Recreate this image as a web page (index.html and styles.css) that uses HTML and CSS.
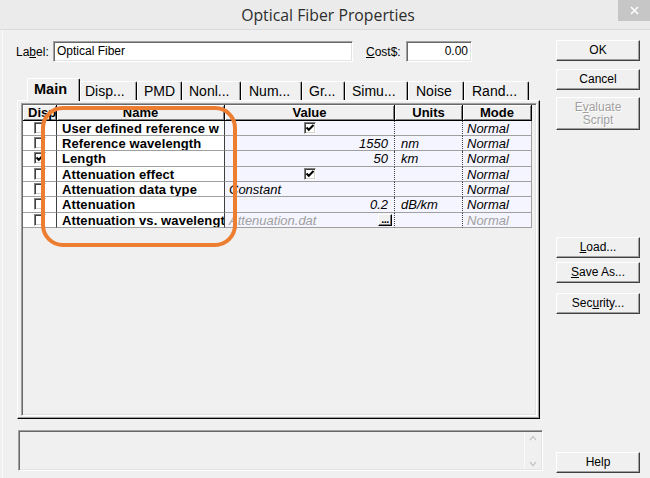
FILE: index.html
```html
<!DOCTYPE html>
<html>
<head>
<meta charset="utf-8">
<title>Optical Fiber Properties</title>
<link rel="stylesheet" href="styles.css">
</head>
<body>
<div class="window">
  <div class="titlebar">
    <div class="title">Optical Fiber Properties</div>
    <div class="close"><svg width="9" height="9" viewBox="0 0 9 9"><path d="M1 1 L8 8 M8 1 L1 8" stroke="#fff" stroke-width="1.5" fill="none"/></svg></div>
  </div>
  <div class="content">
    <div class="main">
      <div class="label-row">
        <span class="field-label">La<u>b</u>el:</span>
        <div class="text-input label-input">Optical Fiber</div>
        <span class="cost-label"><u>C</u>ost$:</span>
        <div class="text-input cost-input">0.00</div>
      </div>
      <div class="tabs">
        <div class="tab active">Main</div>
        <div class="tab">Disp...</div>
        <div class="tab">PMD</div>
        <div class="tab">Nonl...</div>
        <div class="tab">Num...</div>
        <div class="tab">Gr...</div>
        <div class="tab">Simu...</div>
        <div class="tab">Noise</div>
        <div class="tab">Rand...</div>
      </div>
      <div class="panel">
        <div class="grid">
          <table class="props">
            <colgroup>
              <col class="c-disp"><col class="c-name"><col class="c-value"><col class="c-units"><col class="c-mode">
            </colgroup>
            <thead>
              <tr><th class="h-disp">Disp</th><th>Name</th><th>Value</th><th>Units</th><th>Mode</th></tr>
            </thead>
            <tbody>
              <tr>
                <td class="disp"><span class="cb"></span></td>
                <td class="name">User defined reference w</td>
                <td class="val center"><span class="cb"><svg width="10" height="10" viewBox="0 0 10 10"><path d="M1.5 4.5 L3.8 6.8 L8.5 2" stroke="#000" stroke-width="2" fill="none"/></svg></span></td>
                <td class="units"></td>
                <td class="mode">Normal</td>
              </tr>
              <tr>
                <td class="disp"><span class="cb"></span></td>
                <td class="name">Reference wavelength</td>
                <td class="val num">1550</td>
                <td class="units">nm</td>
                <td class="mode">Normal</td>
              </tr>
              <tr class="tall">
                <td class="disp"><span class="cb"><svg width="10" height="10" viewBox="0 0 10 10"><path d="M1.5 4.5 L3.8 6.8 L8.5 2" stroke="#000" stroke-width="2" fill="none"/></svg></span></td>
                <td class="name">Length</td>
                <td class="val num">50</td>
                <td class="units">km</td>
                <td class="mode">Normal</td>
              </tr>
              <tr>
                <td class="disp"><span class="cb"></span></td>
                <td class="name">Attenuation effect</td>
                <td class="val center"><span class="cb"><svg width="10" height="10" viewBox="0 0 10 10"><path d="M1.5 4.5 L3.8 6.8 L8.5 2" stroke="#000" stroke-width="2" fill="none"/></svg></span></td>
                <td class="units"></td>
                <td class="mode">Normal</td>
              </tr>
              <tr>
                <td class="disp"><span class="cb"></span></td>
                <td class="name">Attenuation data type</td>
                <td class="val text">Constant</td>
                <td class="units"></td>
                <td class="mode">Normal</td>
              </tr>
              <tr class="tall">
                <td class="disp"><span class="cb"></span></td>
                <td class="name">Attenuation</td>
                <td class="val num">0.2</td>
                <td class="units">dB/km</td>
                <td class="mode">Normal</td>
              </tr>
              <tr class="disabled">
                <td class="disp"><span class="cb"></span></td>
                <td class="name">Attenuation vs. wavelengt</td>
                <td class="val text"><div class="file-cell"><span>Attenuation.dat</span><span class="dots">...</span></div></td>
                <td class="units"></td>
                <td class="mode">Normal</td>
              </tr>
            </tbody>
          </table>
        </div>
      </div>
      <div class="desc">
        <div class="scroll">
          <svg width="8" height="6" viewBox="0 0 8 6"><path d="M1 5 L4 1.5 L7 5" stroke="#c4c4c4" stroke-width="1.2" fill="none"/></svg>
          <svg width="8" height="6" viewBox="0 0 8 6"><path d="M1 1 L4 4.5 L7 1" stroke="#c4c4c4" stroke-width="1.2" fill="none"/></svg>
        </div>
      </div>
    </div>
    <div class="side">
      <button class="btn btn-ok">OK</button>
      <button class="btn btn-cancel">Cancel</button>
      <button class="btn btn-eval" disabled>E<u>v</u>aluate<br>Script</button>
      <button class="btn btn-load"><u>L</u>oad...</button>
      <button class="btn btn-save"><u>S</u>ave As...</button>
      <button class="btn btn-security">Sec<u>u</u>rity...</button>
      <button class="btn btn-help">Help</button>
    </div>
  </div>
  <div class="highlight"></div>
</div>
</body>
</html>
```
FILE: styles.css
```css
* { box-sizing: border-box; }
html, body { margin: 0; padding: 0; }
body {
  width: 650px;
  height: 478px;
  overflow: hidden;
  background: #f0f0f0;
  font-family: "Liberation Sans", Arial, sans-serif;
  font-size: 12px;
  color: #000;
}
.window {
  position: relative;
  width: 650px;
  height: 478px;
  display: flex;
  flex-direction: column;
}
.titlebar {
  flex: none;
  height: 30px;
  display: grid;
  grid-template-columns: 32px 1fr 32px;
  align-items: start;
  background: #ebebeb;
  border-bottom: 1px solid #dadada;
}
.title {
  grid-column: 2;
  text-align: center;
  padding-left: 6px;
  font-family: "Open Sans", "Liberation Sans", sans-serif;
  font-size: 15.8px;
  line-height: 30px;
  color: #2e2e2e;
}
.close {
  grid-column: 3;
  width: 32px;
  height: 21px;
  background: #c6c6c6;
  display: flex;
  align-items: center;
  justify-content: center;
}
.content {
  flex: 1;
  display: flex;
  box-shadow: inset 2px 0 #f0f0f0, inset 3px 0 #fafafa;
}
.main {
  width: 556px;
  padding: 11px 0 0 16px;
  display: flex;
  flex-direction: column;
}
.label-row {
  display: flex;
  align-items: center;
  height: 21px;
}
.field-label { width: 37px; }
.cost-label { margin-left: 13px; width: 40px; }
.text-input {
  height: 21px;
  background: #fff;
  border: 1px solid;
  border-color: #a0a0a0 #fff #fff #a0a0a0;
  box-shadow: inset 1px 1px #696969, inset -1px -1px #e3e3e3;
  line-height: 18px;
  padding: 0 3px;
  white-space: nowrap;
}
.label-input { width: 300px; }
.cost-input { width: 66px; text-align: right; padding-right: 3px; }

.tabs {
  display: flex;
  align-items: flex-end;
  height: 22px;
  margin-top: 16px;
  margin-left: 11px;
}
.tab {
  height: 19px;
  padding-left: 6px;
  font-size: 14px;
  line-height: 18px;
  white-space: nowrap;
  overflow: hidden;
  background: #f0f0f0;
  border-top: 1px solid #fff;
  border-left: 1px solid #fff;
  border-right: 1px solid #000;
  box-shadow: inset -1px 0 #a0a0a0;
  border-radius: 2px 2px 0 0;
}
.tab.active {
  height: 23px;
  margin-bottom: -1px;
  position: relative;
  z-index: 1;
  font-weight: bold;
  font-size: 14.5px;
  line-height: 21px;
}
.tab:nth-child(1) { width: 53px; }
.tab:nth-child(2) { width: 57px; padding-left: 4px; }
.tab:nth-child(3) { width: 45px; }
.tab:nth-child(4) { width: 59px; }
.tab:nth-child(5) { width: 61px; padding-left: 7px; }
.tab:nth-child(6) { width: 43px; }
.tab:nth-child(7) { width: 63px; }
.tab:nth-child(8) { width: 56px; padding-left: 7px; }
.tab:nth-child(9) { width: 65px; padding-left: 7px; }

.panel {
  margin-left: 1px;
  width: 523px;
  height: 319px;
  display: flex;
  border: 1px solid;
  border-color: #fff #000 #000 #fff;
  box-shadow: inset -1px -1px #a0a0a0;
  padding: 2px 2px 2px 3px;
}
.grid {
  flex: 1;
  background: #f0f0f0;
  border: 1px solid;
  border-color: #a0a0a0 #fff #fff #a0a0a0;
  box-shadow: inset 1px 1px #696969, inset -1px -1px #e3e3e3;
  padding: 1px 0 0 1px;
  overflow: hidden;
}
.props {
  table-layout: fixed;
  width: 509px;
  border-collapse: separate;
  border-spacing: 0;
  font-size: 13px;
}
.c-disp { width: 34px; }
.c-name { width: 168px; }
.c-value { width: 170px; }
.c-units { width: 68px; }
.c-mode { width: 69px; }
.props th {
  height: 16px;
  padding: 0;
  font-weight: bold;
  line-height: 13px;
  text-align: center;
  background: #f0f0f0;
  border-right: 1px solid #000;
  border-bottom: 1px solid #000;
  box-shadow: inset 1px 1px #fff, inset -1px -1px #808080;
  white-space: nowrap;
  overflow: hidden;
}
.props th.h-disp { text-align: left; padding-left: 5px; }
.props td {
  height: 15px;
  padding: 0;
  line-height: 13px;
  white-space: nowrap;
  overflow: hidden;
  border-bottom: 1px solid #a0a0a0;
  vertical-align: middle;
}
.props tr.tall td { height: 16px; }
.props td.disp {
  background: #fff;
  text-align: center;
  border-right: 1px solid #404040;
}
.props td.name {
  background: #fff;
  font-weight: bold;
  font-size: 13px;
  letter-spacing: 0.1px;
  padding-left: 5px;
  border-right: 1px solid #404040;
}
.props td.val {
  background: #f5f5ff;
  font-style: italic;
  border-right: 1px dotted #404040;
}
.props td.val.center { text-align: center; }
.props td.val.num { text-align: right; padding-right: 6px; }
.props td.val.text { padding-left: 4px; padding-right: 2px; }
.props td.units {
  background: #f5f5ff;
  font-style: italic;
  padding-left: 6px;
  border-right: 1px dotted #404040;
}
.props td.mode {
  background: #f5f5ff;
  font-style: italic;
  padding-left: 4px;
  border-right: 1px solid #a0a0a0;
}
.props tr.disabled td.val,
.props tr.disabled td.mode { color: #a0a0a0; }
.file-cell {
  display: flex;
  align-items: center;
  justify-content: space-between;
}
.dots {
  width: 14px;
  height: 12px;
  background: #f0f0f0;
  border: 1px solid;
  border-color: #fff #000 #000 #fff;
  box-shadow: inset -1px -1px #808080;
  font-style: normal;
  font-weight: bold;
  font-size: 11px;
  line-height: 8px;
  color: #000;
  text-align: center;
  letter-spacing: -0.5px;
  overflow: hidden;
}
.cb {
  display: inline-block;
  width: 12px;
  height: 12px;
  vertical-align: middle;
  background: #fff;
  border: 1px solid;
  border-color: #808080 #fff #fff #808080;
  box-shadow: inset 1px 1px #404040, inset -1px -1px #d4d0c8;
  position: relative;
  top: -1px;
}
.cb svg { display: block; }

.desc {
  margin-top: 11px;
  margin-left: 2px;
  width: 525px;
  height: 41px;
  display: flex;
  justify-content: flex-end;
  border: 1px solid;
  border-color: #a0a0a0 #fff #fff #a0a0a0;
  box-shadow: inset 1px 1px #696969, inset -1px -1px #e3e3e3;
  padding: 1px;
}
.scroll {
  width: 17px;
  border-left: 1px solid #fafafa;
  display: flex;
  flex-direction: column;
  justify-content: space-between;
  align-items: center;
  padding: 3px 0 2px;
}
.scroll svg { display: block; }

.side {
  width: 84px;
  padding: 10px 0 5px;
  display: flex;
  flex-direction: column;
}
.btn {
  width: 84px;
  height: 21px;
  margin: 0;
  padding: 0;
  background: #f0f0f0;
  border: 1px solid;
  border-color: #fff #404040 #404040 #fff;
  box-shadow: inset -1px -1px #a0a0a0;
  font-family: "Liberation Sans", Arial, sans-serif;
  font-size: 12px;
  line-height: 13px;
  color: #000;
  text-align: center;
}
.btn:disabled { color: #a0a0a0; text-shadow: 1px 1px #fff; }
.btn-cancel { margin-top: 8px; }
.btn-eval { margin-top: 7px; height: 33px; }
.btn-load { margin-top: 107px; }
.btn-save { margin-top: 4px; }
.btn-security { margin-top: 10px; }
.btn-help { margin-top: auto; }

.highlight {
  position: absolute;
  left: 41px;
  top: 106px;
  width: 196px;
  height: 141px;
  border: 4px solid #ed7d31;
  border-radius: 22px;
  pointer-events: none;
}
```
